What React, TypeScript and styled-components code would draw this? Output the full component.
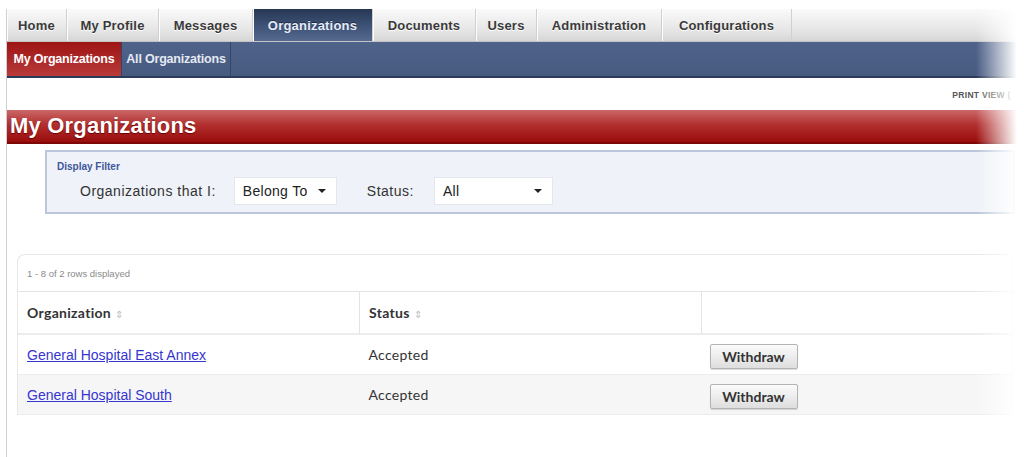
import styled, { createGlobalStyle } from "styled-components";

const GlobalStyle = createGlobalStyle`
  html, body {
    margin: 0;
    padding: 0;
    background: #fff;
  }
  body {
    font-family: "Liberation Sans", Arial, sans-serif;
    color: #333;
  }
`;

const Screen = styled.div`
  position: relative;
  width: 1024px;
  height: 457px;
  overflow: hidden;
  padding-top: 9px;
  box-sizing: border-box;
`;

const Frame = styled.div`
  margin-left: 6px;
  height: 100%;
  border-left: 1px solid #cfcfcf;
`;

const TabBar = styled.nav`
  display: flex;
  height: 33px;
  background: linear-gradient(#fafafa, #e4e4e4 70%, #d6d6d6);
  border-bottom: 1px solid #c4c4c4;
  box-sizing: border-box;
`;

const Tab = styled.div<{ $active?: boolean; $width: number }>`
  width: ${(p) => p.$width}px;
  display: flex;
  align-items: center;
  justify-content: center;
  font-size: 13px;
  font-weight: bold;
  letter-spacing: 0.2px;
  box-sizing: border-box;
  border-right: 1px solid #d0d0d0;
  box-shadow: inset 1px 0 0 #fdfdfd;
  color: ${(p) => (p.$active ? "#e6ecf7" : "#3a3a3a")};
  text-shadow: ${(p) => (p.$active ? "0 -1px 0 #1c2a44" : "0 1px 0 #fff")};
  background: ${(p) =>
    p.$active ? "linear-gradient(#263753, #3f5478 55%, #56698f)" : "transparent"};
`;

const SubNav = styled.div`
  display: flex;
  height: 36px;
  background: linear-gradient(#4f6289, #475a80);
  border-bottom: 2px solid #2c3b5b;
  box-sizing: border-box;
`;

const SubItem = styled.div<{ $active?: boolean; $width: number }>`
  width: ${(p) => p.$width}px;
  display: flex;
  align-items: center;
  justify-content: center;
  font-size: 12.5px;
  font-weight: bold;
  letter-spacing: -0.2px;
  color: ${(p) => (p.$active ? "#fff" : "#e4e9f3")};
  box-sizing: border-box;
  border-right: 1px solid #34456a;
  background: ${(p) => (p.$active ? "linear-gradient(#9e1414, #b83a3a)" : "transparent")};
`;

const PrintRow = styled.div`
  height: 31px;
  display: flex;
  align-items: flex-end;
  justify-content: flex-end;
  padding: 0 0 9px;
  box-sizing: border-box;
  font-size: 8.5px;
  font-weight: bold;
  color: #555;
  letter-spacing: 0.3px;
`;

const PageTitle = styled.h1`
  margin: 1px 0 0;
  height: 34px;
  display: flex;
  align-items: center;
  padding-left: 3px;
  font-size: 22px;
  font-weight: bold;
  letter-spacing: 0.2px;
  color: #fff;
  text-shadow: 0 1px 1px #6a0000;
  background: linear-gradient(#cb6868, #b23030 45%, #9a0c0c);
  border-bottom: 2px solid #7d0606;
  box-sizing: border-box;
`;

const FilterBox = styled.fieldset`
  margin: 6px 9px 0 38px;
  height: 64px;
  padding: 9px 0 0 10px;
  box-sizing: border-box;
  border: 2px solid #bac6db;
  background: #eff2f8;
`;

const FilterLegend = styled.div`
  font-size: 10px;
  font-weight: bold;
  color: #40579a;
`;

const FilterRow = styled.div`
  display: flex;
  align-items: center;
  margin-top: 5px;
  padding-left: 23px;
`;

const FilterLabel = styled.span<{ $gap: number }>`
  font-size: 14px;
  letter-spacing: 0.5px;
  color: #333;
  margin-right: ${(p) => p.$gap}px;
`;

const Select = styled.div<{ $width: number; $after: number }>`
  width: ${(p) => p.$width}px;
  height: 28px;
  display: flex;
  align-items: center;
  justify-content: space-between;
  padding: 0 10px 0 8px;
  margin-right: ${(p) => p.$after}px;
  box-sizing: border-box;
  background: #fff;
  border: 1px solid #e3e6ec;
  font-size: 14px;
  letter-spacing: 0.3px;
  color: #222;
`;

const Caret = styled.span`
  width: 0;
  height: 0;
  border-left: 4px solid transparent;
  border-right: 4px solid transparent;
  border-top: 4px solid #222;
`;

const Card = styled.div`
  margin: 40px 0 0 10px;
  width: 994px;
  border: 1px solid #e6e6e6;
  border-bottom: none;
  border-radius: 8px 8px 0 0;
  background: #fff;
`;

const RowCount = styled.div`
  height: 36px;
  display: flex;
  align-items: center;
  padding-left: 9px;
  font-size: 9.5px;
  color: #8a8a8a;
  border-bottom: 1px solid #e4e4e4;
`;

const Table = styled.table`
  width: 100%;
  border-collapse: collapse;
  font-family: Lato, "Liberation Sans", sans-serif;

  th {
    height: 41px;
    text-align: left;
    padding: 0 8px 0 9px;
    font-size: 14px;
    font-weight: bold;
    letter-spacing: 0.3px;
    color: #333;
    border-bottom: 2px solid #ececec;
    border-right: 1px solid #e4e4e4;
  }

  th:last-child {
    border-right: none;
  }

  td {
    height: 39px;
    padding: 0 8px 0 9px;
    font-size: 14px;
    letter-spacing: 0.3px;
    color: #333;
  }
`;

const SortMark = styled.span`
  font-size: 10px;
  color: #c0c0c0;
  margin-left: 4px;
  font-weight: normal;
`;

const BodyRow = styled.tr<{ $striped?: boolean }>`
  background: ${(p) => (p.$striped ? "#f6f6f6" : "#fff")};
  border-bottom: 1px solid #ececec;
`;

const OrgLink = styled.a`
  font-family: "Liberation Sans", Arial, sans-serif;
  font-size: 14px;
  letter-spacing: 0px;
  color: #3535d0;
  text-decoration: underline;
`;

const WithdrawButton = styled.button`
  margin-top: 4px;
  margin-left: -1px;
  width: 88px;
  height: 25px;
  font-family: Lato, "Liberation Sans", sans-serif;
  font-size: 14px;
  font-weight: bold;
  color: #333;
  border: 1px solid #b3b3b3;
  border-radius: 2px;
  background: linear-gradient(#fbfbfb, #dedede);
  box-shadow: 0 1px 1px rgba(0, 0, 0, 0.15);
`;

// soft white fade along the right edge of the page
const EdgeFade = styled.div`
  position: absolute;
  top: 0;
  right: 0;
  width: 48px;
  height: 100%;
  background: linear-gradient(to right, rgba(255, 255, 255, 0), #fff 85%);
  pointer-events: none;
`;

const tabs = [
  { label: "Home", width: 60 },
  { label: "My Profile", width: 92 },
  { label: "Messages", width: 94 },
  { label: "Organizations", width: 120, active: true },
  { label: "Documents", width: 103 },
  { label: "Users", width: 61 },
  { label: "Administration", width: 125 },
  { label: "Configurations", width: 130 },
];

const orgs = ["General Hospital East Annex", "General Hospital South"];

export default function App() {
  return (
    <Screen>
      <GlobalStyle />
      <Frame>
        <TabBar>
          {tabs.map((t) => (
            <Tab key={t.label} $width={t.width} $active={t.active}>
              {t.label}
            </Tab>
          ))}
        </TabBar>
        <SubNav>
          <SubItem $active $width={115}>My Organizations</SubItem>
          <SubItem $width={109}>All Organizations</SubItem>
        </SubNav>
        <PrintRow>PRINT VIEW (&nbsp;&nbsp;&nbsp;&nbsp;&nbsp;</PrintRow>
        <PageTitle>My Organizations</PageTitle>
        <FilterBox>
          <FilterLegend>Display Filter</FilterLegend>
          <FilterRow>
            <FilterLabel $gap={18}>Organizations that I:</FilterLabel>
            <Select $width={103} $after={30}>
              Belong To <Caret />
            </Select>
            <FilterLabel $gap={20}>Status:</FilterLabel>
            <Select $width={119} $after={0}>
              All <Caret />
            </Select>
          </FilterRow>
        </FilterBox>
        <Card>
          <RowCount>1 - 8 of 2 rows displayed</RowCount>
          <Table>
            <thead>
              <tr>
                <th style={{ width: 324 }}>
                  Organization<SortMark>⇕</SortMark>
                </th>
                <th style={{ width: 324 }}>
                  Status<SortMark>⇕</SortMark>
                </th>
                <th />
              </tr>
            </thead>
            <tbody>
              {orgs.map((name, i) => (
                <BodyRow key={name} $striped={i % 2 === 1}>
                  <td>
                    <OrgLink href="#">{name}</OrgLink>
                  </td>
                  <td>Accepted</td>
                  <td>
                    <WithdrawButton>Withdraw</WithdrawButton>
                  </td>
                </BodyRow>
              ))}
            </tbody>
          </Table>
        </Card>
      </Frame>
      <EdgeFade />
    </Screen>
  );
}
